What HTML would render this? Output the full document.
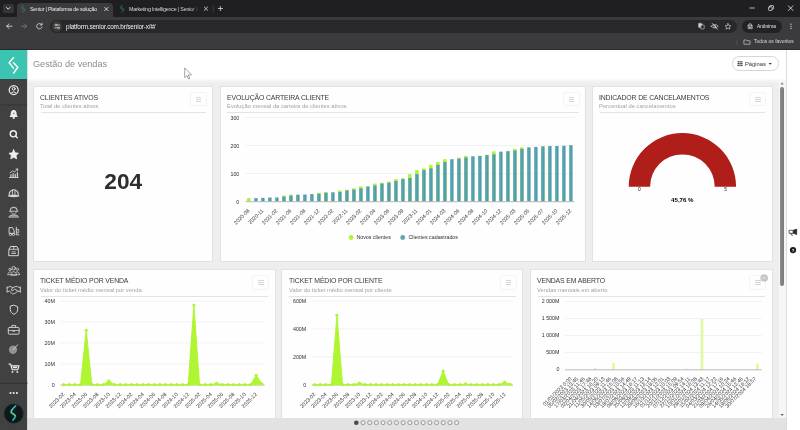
<!DOCTYPE html>
<html lang="pt-br"><head><meta charset="utf-8"><title>Senior | Plataforma de solução</title>
<style>
*{box-sizing:border-box;margin:0;padding:0}
html,body{width:800px;height:430px;overflow:hidden;background:#eeeeee;font-family:"Liberation Sans", sans-serif;}
#root{position:relative;width:800px;height:430px;overflow:hidden}
.abs{position:absolute}
#tabbar{left:0;top:0;width:800px;height:17px;background:#1f1e21}
#toolbar{left:0;top:17px;width:800px;height:33px;background:#3b3a3c;border-bottom:0.6px solid #2b2a2c}
#acttab{left:17px;top:3px;width:96px;height:14.5px;background:#3b3a3c;border-radius:4px 4px 0 0}
.tabtxt{position:absolute;font-size:5.35px;color:#ededed;white-space:nowrap;top:5.9px;line-height:6px;letter-spacing:-0.2px}
#omni{left:50px;top:19.7px;width:687px;height:13.4px;border-radius:7px;background:#282729}
#anon{left:741.5px;top:19.7px;width:40.4px;height:13.4px;border-radius:7px;background:#222123}
#side{left:0;top:50px;width:27.3px;height:380px;background:#414141;box-shadow:0.4px 0 1.2px rgba(0,0,0,0.35)}
#logo{left:0;top:49.8px;width:27.2px;height:29.5px;background:#3ac4b1}
#userblk{left:0;top:104.3px;width:27.3px;height:1.4px;background:linear-gradient(180deg,#393939,#3d3d3d)}
#hdr{left:27.5px;top:50px;width:758px;height:34px;background:linear-gradient(180deg,#ffffff 0,#ffffff 28.6px,#f3f3f3 31px,#eeeeee 34px)}
#hdr .ttl{position:absolute;left:5.7px;top:8.6px;font-size:9.15px;color:#8c8c8c;line-height:11px;white-space:nowrap}
#content{left:27.5px;top:80px;width:758px;height:338px;background:#eeeeee}
#pages{left:731.8px;top:56.4px;width:46.8px;height:14.4px;border:0.7px solid #d6d6d6;border-radius:7.2px;background:#fff}
#rstrip{left:785.6px;top:50px;width:14.4px;height:380px;background:#ffffff;border-left:0.6px solid #dcdcdc}
#bbar{left:27.3px;top:418px;width:758.4px;height:12px;background:#e2e2e2}
#sbtrack{left:779.2px;top:80px;width:6.4px;height:338px;background:#f6f6f6}
#sbthumb{left:780px;top:87px;width:3.8px;height:199px;background:linear-gradient(90deg,#8c8c8c,#7a7a7a);border-radius:1.9px}
.card{position:absolute;background:#fefefe;border:0.8px solid #e2e2e2}
.ct{position:absolute;left:6.2px;top:6.9px;font-size:6.9px;letter-spacing:-0.14px;line-height:8px;color:#3a3a3a;white-space:nowrap}
.cs{position:absolute;left:6.3px;top:16.3px;font-size:5.82px;line-height:7px;color:#a3a3a3;white-space:nowrap}
.cd{position:absolute;left:6.6px;right:6.4px;top:25.3px;height:0.9px;background:#e3e3e3}
.cm{position:absolute;right:5.4px;top:5.2px;width:17.1px;height:14.2px;border:0.7px solid #f4f4f4;border-radius:1.8px;background:#fefefe}
.cm i{position:absolute;left:5.3px;width:5.2px;height:1px;background:#d6d6d6}
.cm i:nth-child(1){top:3.85px}
.cm i:nth-child(2){top:5.9px}
.cm i:nth-child(3){top:7.95px}
svg text{font-family:"Liberation Sans", sans-serif}
svg,.ct,.cs,.tabtxt,#big,.ttl,.t{will-change:transform}
.ax{font-size:5.3px;fill:#2e2e2e}
#big{left:33px;top:168px;width:180.6px;text-align:center;font-size:22.7px;font-weight:bold;color:#2e2e2e;line-height:27px}
</style></head>
<body><div id="root">

<!-- ===== browser chrome ===== -->
<div id="tabbar" class="abs"></div>
<div id="toolbar" class="abs"></div>
<div id="acttab" class="abs"></div>
<div class="abs" style="left:3px;top:3.6px;width:10.5px;height:9.4px;border-radius:2.6px;background:#353637"></div>
<div class="tabtxt" style="left:30px">Senior | Plataforma de solução</div>
<div class="tabtxt" style="left:129px;width:70px;overflow:hidden;color:#d6d6d6;-webkit-mask-image:linear-gradient(90deg,#000 88%,transparent)">Marketing Intelligence | Senior X</div>
<div id="omni" class="abs"></div>
<div class="abs" style="left:52px;top:21.2px;width:10.4px;height:10.4px;border-radius:5.2px;background:#3b3b3c"></div>
<div class="abs t" style="left:65.5px;top:23.2px;font-size:6.4px;letter-spacing:-0.16px;line-height:7px;color:#f2f2f2;white-space:nowrap">platform.senior.com.br/senior-x/#/</div>
<div id="anon" class="abs"></div>
<div class="abs t" style="left:757.2px;top:23.7px;font-size:4.8px;line-height:6px;color:#ececec;white-space:nowrap">Anônima</div>
<div class="abs t" style="left:754.2px;top:39.2px;font-size:4.95px;line-height:6px;color:#dedede;white-space:nowrap">Todos os favoritos</div>

<svg class="abs" style="left:0;top:0" width="800" height="50" viewBox="0 0 800 50">
 <g fill="none" stroke="#e4e4e4" stroke-width="1" stroke-linecap="round" stroke-linejoin="round">
  <!-- tab search chevron -->
  <path d="M6.6,7.5 L8.25,9.2 L9.9,7.5" stroke-width="1"/>
  <!-- active tab close -->
  <path d="M104.7,7.4 L108,10.7 M108,7.4 L104.7,10.7" stroke-width="0.9"/>
  <!-- tab2 close -->
  <path d="M204.3,7 L207.6,10.3 M207.6,7 L204.3,10.3" stroke="#cfcfcf" stroke-width="0.9"/>
  <path d="M213.3,5.6 V11.4" stroke="#55575a" stroke-width="0.6"/>
  <path d="M218.3,8.5 H222.5 M220.4,6.4 V10.6" stroke="#d8d8d8" stroke-width="0.8"/>
  <!-- window controls -->
  <path d="M750,8 H754.4" stroke-width="0.8"/>
  <rect x="768.6" y="6.8" width="3.6" height="3.6" rx="0.7" stroke-width="0.8"/>
  <path d="M769.9,6.8 V5.9 Q769.9,5.5 770.3,5.5 H773 Q773.5,5.5 773.5,6 V8.7 Q773.5,9.1 773.1,9.1 H772.3" stroke-width="0.7"/>
  <path d="M788.3,5.8 L793,10.5 M793,5.8 L788.3,10.5" stroke-width="0.85"/>
  <!-- back / fwd / reload -->
  <path d="M12,26.2 H6.8 M9,23.9 L6.7,26.2 L9,28.5" stroke="#d9d9d9" stroke-width="0.9"/>
  <path d="M21.4,26.2 H26.6 M24.4,23.9 L26.7,26.2 L24.4,28.5" stroke="#767778" stroke-width="0.9"/>
  <path d="M41.6,24.6 A2.7,2.7 0 1 0 42,27.1" stroke="#d9d9d9" stroke-width="0.9"/>
  <path d="M42.1,23.2 V25 H40.3" stroke="#d9d9d9" stroke-width="0.8"/>
  <!-- tune icon -->
  <path d="M55,25 H59.6 M54.8,27.8 H59.4" stroke="#dedede" stroke-width="0.7"/>
  <circle cx="56" cy="25" r="0.9" fill="#3b3b3c" stroke="#dedede" stroke-width="0.6"/>
  <circle cx="58.4" cy="27.8" r="0.9" fill="#3b3b3c" stroke="#dedede" stroke-width="0.6"/>
  <!-- translate -->
  <rect x="698.6" y="23.4" width="3.4" height="4" rx="0.5" fill="#cfcfcf" stroke="#cfcfcf" stroke-width="0.5"/>
  <rect x="700.8" y="25" width="3.4" height="4" rx="0.5" fill="#27282a" stroke="#cfcfcf" stroke-width="0.6"/>
  <!-- eye off -->
  <path d="M711.2,26.3 Q714.7,22.5 718.2,26.3 Q714.7,30 711.2,26.3 Z" stroke="#d6d6d6" stroke-width="0.7"/>
  <circle cx="714.7" cy="26.3" r="1" stroke="#d6d6d6" stroke-width="0.6"/>
  <path d="M712.2,23.4 L717.4,29.2" stroke="#d6d6d6" stroke-width="0.8"/>
  <!-- star -->
  <path d="M728,23.6 L728.85,25.45 L730.9,25.7 L729.4,27.1 L729.8,29.1 L728,28.1 L726.2,29.1 L726.6,27.1 L725.1,25.7 L727.15,25.45 Z" stroke="#d6d6d6" stroke-width="0.65"/>
  <!-- incognito -->
  <path d="M747.6,25.9 H752.6 M748.6,25.7 L749.1,23.9 H751.1 L751.6,25.7" stroke="#ececec" stroke-width="0.7"/>
  <circle cx="748.9" cy="27.9" r="0.95" stroke="#ececec" stroke-width="0.6"/>
  <circle cx="751.3" cy="27.9" r="0.95" stroke="#ececec" stroke-width="0.6"/>
  <!-- bookmarks sep + folder -->
  <path d="M737,39.4 V44.6" stroke="#5d5e60" stroke-width="0.6"/>
  <path d="M744.3,40 H746.4 L747.1,40.8 H750 V44.2 H744.3 Z" stroke="#d6d6d6" stroke-width="0.65"/>
 </g>
 <g fill="#e0e0e0"><circle cx="791" cy="24.2" r="0.65"/><circle cx="791" cy="26.3" r="0.65"/><circle cx="791" cy="28.4" r="0.65"/></g>
 <!-- favicons -->
 <g fill="none" stroke="#2a9285" stroke-width="0.75" stroke-linecap="round" stroke-linejoin="round">
  <path d="M23.2,5.3 L21.4,7.6 L23.2,9.8 M23.2,7.6 L25,9.7 L23.2,12"/>
  <path d="M122.2,5.3 L120.4,7.6 L122.2,9.8 M122.2,7.6 L124,9.7 L122.2,12"/>
 </g>
</svg>

<!-- ===== app ===== -->
<div id="content" class="abs"></div>
<div id="hdr" class="abs"><div class="ttl">Gestão de vendas</div></div>
<div id="pages" class="abs"></div>
<div class="abs t" style="left:745.2px;top:60.5px;font-size:5.8px;line-height:7px;color:#333;white-space:nowrap">Páginas</div>
<svg class="abs" style="left:730px;top:54px" width="52" height="20" viewBox="730 54 52 20">
 <g fill="#333">
  <rect x="737.6" y="61.2" width="1.3" height="1.3"/><rect x="739.4" y="61.2" width="1.3" height="1.3"/><rect x="741.2" y="61.2" width="1.3" height="1.3"/>
  <rect x="737.6" y="63" width="1.3" height="1.3"/><rect x="739.4" y="63" width="1.3" height="1.3"/><rect x="741.2" y="63" width="1.3" height="1.3"/>
  <rect x="737.6" y="64.8" width="1.3" height="1.3"/><rect x="739.4" y="64.8" width="1.3" height="1.3"/><rect x="741.2" y="64.8" width="1.3" height="1.3"/>
  <path d="M768.6,63 H771.8 L770.2,64.8 Z"/>
 </g>
</svg>

<div class="card" style="left:33px;top:85.7px;width:180px;height:176.3px">
<div class="ct">CLIENTES ATIVOS</div><div class="cs">Total de clientes ativos</div>
<div class="cm"><i></i><i></i><i></i></div>
<div class="cd"></div>
</div>
<div class="card" style="left:219.8px;top:85.7px;width:366.2px;height:176.3px">
<div class="ct">EVOLUÇÃO CARTEIRA CLIENTE</div><div class="cs">Evolução mensal da carteira de clientes ativos</div>
<div class="cm"><i></i><i></i><i></i></div>
<div class="cd"></div>
</div>
<div class="card" style="left:592.2px;top:85.7px;width:180.4px;height:176.3px">
<div class="ct">INDICADOR DE CANCELAMENTOS</div><div class="cs">Percentual de cancelamentos</div>
<div class="cm"><i></i><i></i><i></i></div>
<div class="cd"></div>
</div>
<div class="card" style="left:33px;top:269.3px;width:242.5px;height:160px">
<div class="ct">TICKET MÉDIO POR VENDA</div><div class="cs">Valor do ticket médio mensal por venda</div>
<div class="cm"><i></i><i></i><i></i></div>
<div class="cd"></div>
</div>
<div class="card" style="left:281.4px;top:269.3px;width:241.8px;height:160px">
<div class="ct">TICKET MÉDIO POR CLIENTE</div><div class="cs">Valor do ticket médio mensal por cliente</div>
<div class="cm"><i></i><i></i><i></i></div>
<div class="cd"></div>
</div>
<div class="card" style="left:530px;top:269.3px;width:242.6px;height:160px">
<div class="ct">VENDAS EM ABERTO</div><div class="cs">Vendas mensais em aberto</div>
<div class="cm"><i></i><i></i><i></i></div>
<div class="cd"></div>
</div>

<div id="big" class="abs">204</div>

<svg class="abs" style="left:0;top:0" width="800" height="430" viewBox="0 0 800 430">
<defs>
 <linearGradient id="tg" x1="0" x2="1" y1="0" y2="0"><stop offset="0" stop-color="#6fb4be"/><stop offset="0.5" stop-color="#559fac"/><stop offset="1" stop-color="#4b98a6"/></linearGradient>
 <clipPath id="clipc"><rect x="27.5" y="80" width="752" height="338"/></clipPath>
</defs>
<g clip-path="url(#clipc)">
<line x1="245.5" y1="117.50" x2="574.5" y2="117.50" stroke="#e9e9e9" stroke-width="0.6"/>
<line x1="245.5" y1="145.50" x2="574.5" y2="145.50" stroke="#e9e9e9" stroke-width="0.6"/>
<line x1="245.5" y1="173.50" x2="574.5" y2="173.50" stroke="#e9e9e9" stroke-width="0.6"/>
<text x="239.3" y="120.10" text-anchor="end" class="ax">300</text>
<text x="239.3" y="148.10" text-anchor="end" class="ax">200</text>
<text x="239.3" y="176.10" text-anchor="end" class="ax">100</text>
<text x="239.3" y="204.10" text-anchor="end" class="ax">0</text>
<rect x="247.05" y="198.00" width="3.5" height="3.50" fill="#b0f532"/>
<rect x="254.05" y="198.14" width="3.5" height="3.36" fill="url(#tg)"/>
<rect x="261.05" y="197.86" width="3.5" height="3.64" fill="url(#tg)"/>
<rect x="268.05" y="197.47" width="3.5" height="4.03" fill="url(#tg)"/>
<rect x="275.05" y="197.47" width="3.5" height="4.03" fill="url(#tg)"/>
<rect x="282.05" y="195.62" width="3.5" height="5.88" fill="#b0f532"/>
<rect x="282.05" y="196.60" width="3.5" height="4.90" fill="url(#tg)"/>
<rect x="289.05" y="194.58" width="3.5" height="6.92" fill="#b0f532"/>
<rect x="289.05" y="195.62" width="3.5" height="5.88" fill="url(#tg)"/>
<rect x="296.05" y="194.72" width="3.5" height="6.78" fill="url(#tg)"/>
<rect x="303.05" y="194.58" width="3.5" height="6.92" fill="url(#tg)"/>
<rect x="310.05" y="194.08" width="3.5" height="7.42" fill="url(#tg)"/>
<rect x="317.05" y="192.82" width="3.5" height="8.68" fill="#b0f532"/>
<rect x="317.05" y="193.72" width="3.5" height="7.78" fill="url(#tg)"/>
<rect x="324.05" y="191.98" width="3.5" height="9.52" fill="#b0f532"/>
<rect x="324.05" y="192.82" width="3.5" height="8.68" fill="url(#tg)"/>
<rect x="331.05" y="192.26" width="3.5" height="9.24" fill="url(#tg)"/>
<rect x="338.05" y="190.44" width="3.5" height="11.06" fill="#b0f532"/>
<rect x="338.05" y="192.06" width="3.5" height="9.44" fill="url(#tg)"/>
<rect x="345.05" y="189.74" width="3.5" height="11.76" fill="#b0f532"/>
<rect x="345.05" y="190.44" width="3.5" height="11.06" fill="url(#tg)"/>
<rect x="352.05" y="188.34" width="3.5" height="13.16" fill="#b0f532"/>
<rect x="352.05" y="189.63" width="3.5" height="11.87" fill="url(#tg)"/>
<rect x="359.05" y="186.38" width="3.5" height="15.12" fill="#b0f532"/>
<rect x="359.05" y="188.34" width="3.5" height="13.16" fill="url(#tg)"/>
<rect x="366.05" y="186.38" width="3.5" height="15.12" fill="url(#tg)"/>
<rect x="373.05" y="183.58" width="3.5" height="17.92" fill="#b0f532"/>
<rect x="373.05" y="185.54" width="3.5" height="15.96" fill="url(#tg)"/>
<rect x="380.05" y="182.74" width="3.5" height="18.76" fill="#b0f532"/>
<rect x="380.05" y="183.58" width="3.5" height="17.92" fill="url(#tg)"/>
<rect x="387.05" y="181.48" width="3.5" height="20.02" fill="#b0f532"/>
<rect x="387.05" y="182.74" width="3.5" height="18.76" fill="url(#tg)"/>
<rect x="394.05" y="179.10" width="3.5" height="22.40" fill="#b0f532"/>
<rect x="394.05" y="181.06" width="3.5" height="20.44" fill="url(#tg)"/>
<rect x="401.05" y="178.26" width="3.5" height="23.24" fill="#b0f532"/>
<rect x="401.05" y="179.10" width="3.5" height="22.40" fill="url(#tg)"/>
<rect x="408.05" y="174.17" width="3.5" height="27.33" fill="#b0f532"/>
<rect x="408.05" y="177.98" width="3.5" height="23.52" fill="url(#tg)"/>
<rect x="415.05" y="170.14" width="3.5" height="31.36" fill="#b0f532"/>
<rect x="415.05" y="174.17" width="3.5" height="27.33" fill="url(#tg)"/>
<rect x="422.05" y="168.46" width="3.5" height="33.04" fill="#b0f532"/>
<rect x="422.05" y="170.14" width="3.5" height="31.36" fill="url(#tg)"/>
<rect x="429.05" y="164.82" width="3.5" height="36.68" fill="#b0f532"/>
<rect x="429.05" y="168.46" width="3.5" height="33.04" fill="url(#tg)"/>
<rect x="436.05" y="162.02" width="3.5" height="39.48" fill="#b0f532"/>
<rect x="436.05" y="164.82" width="3.5" height="36.68" fill="url(#tg)"/>
<rect x="443.05" y="159.22" width="3.5" height="42.28" fill="#b0f532"/>
<rect x="443.05" y="162.02" width="3.5" height="39.48" fill="url(#tg)"/>
<rect x="450.05" y="159.22" width="3.5" height="42.28" fill="url(#tg)"/>
<rect x="457.05" y="157.82" width="3.5" height="43.68" fill="#b0f532"/>
<rect x="457.05" y="158.66" width="3.5" height="42.84" fill="url(#tg)"/>
<rect x="464.05" y="155.86" width="3.5" height="45.64" fill="#b0f532"/>
<rect x="464.05" y="157.54" width="3.5" height="43.96" fill="url(#tg)"/>
<rect x="471.05" y="156.28" width="3.5" height="45.22" fill="url(#tg)"/>
<rect x="478.05" y="155.86" width="3.5" height="45.64" fill="url(#tg)"/>
<rect x="485.05" y="154.74" width="3.5" height="46.76" fill="#b0f532"/>
<rect x="485.05" y="155.13" width="3.5" height="46.37" fill="url(#tg)"/>
<rect x="492.05" y="151.38" width="3.5" height="50.12" fill="#b0f532"/>
<rect x="492.05" y="154.32" width="3.5" height="47.18" fill="url(#tg)"/>
<rect x="499.05" y="151.66" width="3.5" height="49.84" fill="url(#tg)"/>
<rect x="506.05" y="150.82" width="3.5" height="50.68" fill="#b0f532"/>
<rect x="506.05" y="151.38" width="3.5" height="50.12" fill="url(#tg)"/>
<rect x="513.05" y="148.94" width="3.5" height="52.56" fill="#b0f532"/>
<rect x="513.05" y="150.54" width="3.5" height="50.96" fill="url(#tg)"/>
<rect x="520.05" y="147.32" width="3.5" height="54.18" fill="#b0f532"/>
<rect x="520.05" y="148.94" width="3.5" height="52.56" fill="url(#tg)"/>
<rect x="527.05" y="147.32" width="3.5" height="54.18" fill="url(#tg)"/>
<rect x="534.05" y="146.98" width="3.5" height="54.52" fill="url(#tg)"/>
<rect x="541.05" y="146.06" width="3.5" height="55.44" fill="#b0f532"/>
<rect x="541.05" y="146.51" width="3.5" height="54.99" fill="url(#tg)"/>
<rect x="548.05" y="146.06" width="3.5" height="55.44" fill="url(#tg)"/>
<rect x="555.05" y="146.06" width="3.5" height="55.44" fill="url(#tg)"/>
<rect x="562.05" y="145.78" width="3.5" height="55.72" fill="url(#tg)"/>
<rect x="569.05" y="145.22" width="3.5" height="56.28" fill="url(#tg)"/>
<line x1="245.5" y1="201.7" x2="574.5" y2="201.7" stroke="#a8a8a8" stroke-width="0.8"/>
<text transform="translate(248.50,209.80) rotate(-45)" text-anchor="end" class="ax" dy="1.9">2020-08</text>
<text transform="translate(262.50,209.80) rotate(-45)" text-anchor="end" class="ax" dy="1.9">2020-11</text>
<text transform="translate(276.50,209.80) rotate(-45)" text-anchor="end" class="ax" dy="1.9">2021-02</text>
<text transform="translate(290.50,209.80) rotate(-45)" text-anchor="end" class="ax" dy="1.9">2021-06</text>
<text transform="translate(304.50,209.80) rotate(-45)" text-anchor="end" class="ax" dy="1.9">2021-08</text>
<text transform="translate(318.50,209.80) rotate(-45)" text-anchor="end" class="ax" dy="1.9">2021-12</text>
<text transform="translate(332.50,209.80) rotate(-45)" text-anchor="end" class="ax" dy="1.9">2022-02</text>
<text transform="translate(346.50,209.80) rotate(-45)" text-anchor="end" class="ax" dy="1.9">2022-11</text>
<text transform="translate(360.50,209.80) rotate(-45)" text-anchor="end" class="ax" dy="1.9">2023-02</text>
<text transform="translate(374.50,209.80) rotate(-45)" text-anchor="end" class="ax" dy="1.9">2023-04</text>
<text transform="translate(388.50,209.80) rotate(-45)" text-anchor="end" class="ax" dy="1.9">2023-06</text>
<text transform="translate(402.50,209.80) rotate(-45)" text-anchor="end" class="ax" dy="1.9">2023-09</text>
<text transform="translate(416.50,209.80) rotate(-45)" text-anchor="end" class="ax" dy="1.9">2023-11</text>
<text transform="translate(430.50,209.80) rotate(-45)" text-anchor="end" class="ax" dy="1.9">2024-01</text>
<text transform="translate(444.50,209.80) rotate(-45)" text-anchor="end" class="ax" dy="1.9">2024-03</text>
<text transform="translate(458.50,209.80) rotate(-45)" text-anchor="end" class="ax" dy="1.9">2024-06</text>
<text transform="translate(472.50,209.80) rotate(-45)" text-anchor="end" class="ax" dy="1.9">2024-08</text>
<text transform="translate(486.50,209.80) rotate(-45)" text-anchor="end" class="ax" dy="1.9">2024-10</text>
<text transform="translate(500.50,209.80) rotate(-45)" text-anchor="end" class="ax" dy="1.9">2024-12</text>
<text transform="translate(514.50,209.80) rotate(-45)" text-anchor="end" class="ax" dy="1.9">2025-03</text>
<text transform="translate(528.50,209.80) rotate(-45)" text-anchor="end" class="ax" dy="1.9">2025-05</text>
<text transform="translate(542.50,209.80) rotate(-45)" text-anchor="end" class="ax" dy="1.9">2025-07</text>
<text transform="translate(556.50,209.80) rotate(-45)" text-anchor="end" class="ax" dy="1.9">2025-10</text>
<text transform="translate(570.50,209.80) rotate(-45)" text-anchor="end" class="ax" dy="1.9">2025-12</text>
<circle cx="351.1" cy="237.5" r="2.4" fill="#b0f532"/>
<text x="356.4" y="239.4" class="ax">Novos clientes</text>
<circle cx="402.7" cy="237.5" r="2.4" fill="#5aa6b2"/>
<text x="408.5" y="239.4" class="ax">Clientes cadastrados</text>
<path d="M628.6999999999999,186.7 A53.7,53.7 0 0 1 736.1,186.7 L714.6999999999999,186.7 A32.3,32.3 0 0 0 650.1,186.7 Z" fill="#b01e19"/>
<text x="639.3" y="191" text-anchor="middle" style="font-size:4.8px;fill:#222">0</text>
<text x="725.7" y="191" text-anchor="middle" style="font-size:4.8px;fill:#222">5</text>
<text x="682.3" y="202.2" text-anchor="middle" style="font-size:6.1px;font-weight:bold;fill:#000">45,76 %</text>
<line x1="60.7" y1="301.10" x2="264.7" y2="301.10" stroke="#e9e9e9" stroke-width="0.6"/>
<text x="54.8" y="303.00" text-anchor="end" class="ax">40M</text>
<line x1="60.7" y1="322.00" x2="264.7" y2="322.00" stroke="#e9e9e9" stroke-width="0.6"/>
<text x="54.8" y="323.90" text-anchor="end" class="ax">30M</text>
<line x1="60.7" y1="342.90" x2="264.7" y2="342.90" stroke="#e9e9e9" stroke-width="0.6"/>
<text x="54.8" y="344.80" text-anchor="end" class="ax">20M</text>
<line x1="60.7" y1="363.80" x2="264.7" y2="363.80" stroke="#e9e9e9" stroke-width="0.6"/>
<text x="54.8" y="365.70" text-anchor="end" class="ax">10M</text>
<text x="54.8" y="386.60" text-anchor="end" class="ax">0</text>
<line x1="60.7" y1="385.0" x2="264.7" y2="385.0" stroke="#a8a8a8" stroke-width="0.8"/>
<path d="M63.53,384.70 L63.53,384.70 L69.20,384.70 L74.87,384.70 L80.53,384.70 L86.20,330.36 L91.87,384.70 L97.53,384.70 L103.20,384.70 L108.87,380.94 L114.53,384.70 L120.20,384.70 L125.87,384.70 L131.53,384.70 L137.20,384.70 L142.87,384.70 L148.53,384.70 L154.20,384.70 L159.87,384.70 L165.53,384.70 L171.20,384.70 L176.87,384.70 L182.53,384.70 L188.20,384.70 L193.87,305.07 L199.53,384.70 L205.20,384.70 L210.87,384.70 L216.53,383.24 L222.20,384.70 L227.87,384.70 L233.53,384.70 L239.20,384.70 L244.87,384.70 L250.53,384.70 L256.20,375.30 L261.87,383.86 L261.87,384.70 Z" fill="#b0f532" stroke="#b0f532" stroke-width="1" stroke-linejoin="round"/>
<circle cx="63.53" cy="384.70" r="1.6" fill="#b0f532"/>
<circle cx="69.20" cy="384.70" r="1.6" fill="#b0f532"/>
<circle cx="74.87" cy="384.70" r="1.6" fill="#b0f532"/>
<circle cx="80.53" cy="384.70" r="1.6" fill="#b0f532"/>
<circle cx="86.20" cy="330.36" r="1.6" fill="#b0f532"/>
<circle cx="91.87" cy="384.70" r="1.6" fill="#b0f532"/>
<circle cx="97.53" cy="384.70" r="1.6" fill="#b0f532"/>
<circle cx="103.20" cy="384.70" r="1.6" fill="#b0f532"/>
<circle cx="108.87" cy="380.94" r="1.6" fill="#b0f532"/>
<circle cx="114.53" cy="384.70" r="1.6" fill="#b0f532"/>
<circle cx="120.20" cy="384.70" r="1.6" fill="#b0f532"/>
<circle cx="125.87" cy="384.70" r="1.6" fill="#b0f532"/>
<circle cx="131.53" cy="384.70" r="1.6" fill="#b0f532"/>
<circle cx="137.20" cy="384.70" r="1.6" fill="#b0f532"/>
<circle cx="142.87" cy="384.70" r="1.6" fill="#b0f532"/>
<circle cx="148.53" cy="384.70" r="1.6" fill="#b0f532"/>
<circle cx="154.20" cy="384.70" r="1.6" fill="#b0f532"/>
<circle cx="159.87" cy="384.70" r="1.6" fill="#b0f532"/>
<circle cx="165.53" cy="384.70" r="1.6" fill="#b0f532"/>
<circle cx="171.20" cy="384.70" r="1.6" fill="#b0f532"/>
<circle cx="176.87" cy="384.70" r="1.6" fill="#b0f532"/>
<circle cx="182.53" cy="384.70" r="1.6" fill="#b0f532"/>
<circle cx="188.20" cy="384.70" r="1.6" fill="#b0f532"/>
<circle cx="193.87" cy="305.07" r="1.6" fill="#b0f532"/>
<circle cx="199.53" cy="384.70" r="1.6" fill="#b0f532"/>
<circle cx="205.20" cy="384.70" r="1.6" fill="#b0f532"/>
<circle cx="210.87" cy="384.70" r="1.6" fill="#b0f532"/>
<circle cx="216.53" cy="383.24" r="1.6" fill="#b0f532"/>
<circle cx="222.20" cy="384.70" r="1.6" fill="#b0f532"/>
<circle cx="227.87" cy="384.70" r="1.6" fill="#b0f532"/>
<circle cx="233.53" cy="384.70" r="1.6" fill="#b0f532"/>
<circle cx="239.20" cy="384.70" r="1.6" fill="#b0f532"/>
<circle cx="244.87" cy="384.70" r="1.6" fill="#b0f532"/>
<circle cx="250.53" cy="384.70" r="1.6" fill="#b0f532"/>
<circle cx="256.20" cy="375.30" r="1.6" fill="#b0f532"/>
<circle cx="261.87" cy="383.86" r="1.6" fill="#b0f532"/>
<text transform="translate(63.53,393.40) rotate(-45)" text-anchor="end" class="ax" dy="1.9">2023-02</text>
<text transform="translate(74.87,393.40) rotate(-45)" text-anchor="end" class="ax" dy="1.9">2023-04</text>
<text transform="translate(86.20,393.40) rotate(-45)" text-anchor="end" class="ax" dy="1.9">2023-06</text>
<text transform="translate(97.53,393.40) rotate(-45)" text-anchor="end" class="ax" dy="1.9">2023-08</text>
<text transform="translate(108.87,393.40) rotate(-45)" text-anchor="end" class="ax" dy="1.9">2023-10</text>
<text transform="translate(120.20,393.40) rotate(-45)" text-anchor="end" class="ax" dy="1.9">2023-12</text>
<text transform="translate(131.53,393.40) rotate(-45)" text-anchor="end" class="ax" dy="1.9">2024-02</text>
<text transform="translate(142.87,393.40) rotate(-45)" text-anchor="end" class="ax" dy="1.9">2024-04</text>
<text transform="translate(154.20,393.40) rotate(-45)" text-anchor="end" class="ax" dy="1.9">2024-06</text>
<text transform="translate(165.53,393.40) rotate(-45)" text-anchor="end" class="ax" dy="1.9">2024-08</text>
<text transform="translate(176.87,393.40) rotate(-45)" text-anchor="end" class="ax" dy="1.9">2024-10</text>
<text transform="translate(188.20,393.40) rotate(-45)" text-anchor="end" class="ax" dy="1.9">2024-12</text>
<text transform="translate(199.53,393.40) rotate(-45)" text-anchor="end" class="ax" dy="1.9">2025-02</text>
<text transform="translate(210.87,393.40) rotate(-45)" text-anchor="end" class="ax" dy="1.9">2025-04</text>
<text transform="translate(222.20,393.40) rotate(-45)" text-anchor="end" class="ax" dy="1.9">2025-06</text>
<text transform="translate(233.53,393.40) rotate(-45)" text-anchor="end" class="ax" dy="1.9">2025-08</text>
<text transform="translate(244.87,393.40) rotate(-45)" text-anchor="end" class="ax" dy="1.9">2025-10</text>
<text transform="translate(256.20,393.40) rotate(-45)" text-anchor="end" class="ax" dy="1.9">2025-12</text>
<line x1="311.8" y1="301.00" x2="513" y2="301.00" stroke="#e9e9e9" stroke-width="0.6"/>
<text x="306.2" y="302.90" text-anchor="end" class="ax">600M</text>
<line x1="311.8" y1="328.90" x2="513" y2="328.90" stroke="#e9e9e9" stroke-width="0.6"/>
<text x="306.2" y="330.80" text-anchor="end" class="ax">400M</text>
<line x1="311.8" y1="356.80" x2="513" y2="356.80" stroke="#e9e9e9" stroke-width="0.6"/>
<text x="306.2" y="358.70" text-anchor="end" class="ax">200M</text>
<text x="306.2" y="386.60" text-anchor="end" class="ax">0</text>
<line x1="311.8" y1="385.0" x2="513" y2="385.0" stroke="#a8a8a8" stroke-width="0.8"/>
<path d="M314.59,384.70 L314.59,384.70 L320.18,384.70 L325.77,384.70 L331.36,384.70 L336.95,315.23 L342.54,384.70 L348.13,384.70 L353.72,384.70 L359.31,383.03 L364.89,384.70 L370.48,384.70 L376.07,384.70 L381.66,384.70 L387.25,384.70 L392.84,384.70 L398.43,384.70 L404.02,384.70 L409.61,384.70 L415.19,384.70 L420.78,384.70 L426.37,384.70 L431.96,384.70 L437.55,384.70 L443.14,371.17 L448.73,384.70 L454.32,384.70 L459.91,384.70 L465.49,383.86 L471.08,384.70 L476.67,384.70 L482.26,384.70 L487.85,384.70 L493.44,384.70 L499.03,384.70 L504.62,382.19 L510.21,384.28 L510.21,384.70 Z" fill="#b0f532" stroke="#b0f532" stroke-width="1" stroke-linejoin="round"/>
<circle cx="314.59" cy="384.70" r="1.6" fill="#b0f532"/>
<circle cx="320.18" cy="384.70" r="1.6" fill="#b0f532"/>
<circle cx="325.77" cy="384.70" r="1.6" fill="#b0f532"/>
<circle cx="331.36" cy="384.70" r="1.6" fill="#b0f532"/>
<circle cx="336.95" cy="315.23" r="1.6" fill="#b0f532"/>
<circle cx="342.54" cy="384.70" r="1.6" fill="#b0f532"/>
<circle cx="348.13" cy="384.70" r="1.6" fill="#b0f532"/>
<circle cx="353.72" cy="384.70" r="1.6" fill="#b0f532"/>
<circle cx="359.31" cy="383.03" r="1.6" fill="#b0f532"/>
<circle cx="364.89" cy="384.70" r="1.6" fill="#b0f532"/>
<circle cx="370.48" cy="384.70" r="1.6" fill="#b0f532"/>
<circle cx="376.07" cy="384.70" r="1.6" fill="#b0f532"/>
<circle cx="381.66" cy="384.70" r="1.6" fill="#b0f532"/>
<circle cx="387.25" cy="384.70" r="1.6" fill="#b0f532"/>
<circle cx="392.84" cy="384.70" r="1.6" fill="#b0f532"/>
<circle cx="398.43" cy="384.70" r="1.6" fill="#b0f532"/>
<circle cx="404.02" cy="384.70" r="1.6" fill="#b0f532"/>
<circle cx="409.61" cy="384.70" r="1.6" fill="#b0f532"/>
<circle cx="415.19" cy="384.70" r="1.6" fill="#b0f532"/>
<circle cx="420.78" cy="384.70" r="1.6" fill="#b0f532"/>
<circle cx="426.37" cy="384.70" r="1.6" fill="#b0f532"/>
<circle cx="431.96" cy="384.70" r="1.6" fill="#b0f532"/>
<circle cx="437.55" cy="384.70" r="1.6" fill="#b0f532"/>
<circle cx="443.14" cy="371.17" r="1.6" fill="#b0f532"/>
<circle cx="448.73" cy="384.70" r="1.6" fill="#b0f532"/>
<circle cx="454.32" cy="384.70" r="1.6" fill="#b0f532"/>
<circle cx="459.91" cy="384.70" r="1.6" fill="#b0f532"/>
<circle cx="465.49" cy="383.86" r="1.6" fill="#b0f532"/>
<circle cx="471.08" cy="384.70" r="1.6" fill="#b0f532"/>
<circle cx="476.67" cy="384.70" r="1.6" fill="#b0f532"/>
<circle cx="482.26" cy="384.70" r="1.6" fill="#b0f532"/>
<circle cx="487.85" cy="384.70" r="1.6" fill="#b0f532"/>
<circle cx="493.44" cy="384.70" r="1.6" fill="#b0f532"/>
<circle cx="499.03" cy="384.70" r="1.6" fill="#b0f532"/>
<circle cx="504.62" cy="382.19" r="1.6" fill="#b0f532"/>
<circle cx="510.21" cy="384.28" r="1.6" fill="#b0f532"/>
<text transform="translate(314.59,393.40) rotate(-45)" text-anchor="end" class="ax" dy="1.9">2023-02</text>
<text transform="translate(325.77,393.40) rotate(-45)" text-anchor="end" class="ax" dy="1.9">2023-04</text>
<text transform="translate(336.95,393.40) rotate(-45)" text-anchor="end" class="ax" dy="1.9">2023-06</text>
<text transform="translate(348.13,393.40) rotate(-45)" text-anchor="end" class="ax" dy="1.9">2023-08</text>
<text transform="translate(359.31,393.40) rotate(-45)" text-anchor="end" class="ax" dy="1.9">2023-10</text>
<text transform="translate(370.48,393.40) rotate(-45)" text-anchor="end" class="ax" dy="1.9">2023-12</text>
<text transform="translate(381.66,393.40) rotate(-45)" text-anchor="end" class="ax" dy="1.9">2024-02</text>
<text transform="translate(392.84,393.40) rotate(-45)" text-anchor="end" class="ax" dy="1.9">2024-04</text>
<text transform="translate(404.02,393.40) rotate(-45)" text-anchor="end" class="ax" dy="1.9">2024-06</text>
<text transform="translate(415.19,393.40) rotate(-45)" text-anchor="end" class="ax" dy="1.9">2024-08</text>
<text transform="translate(426.37,393.40) rotate(-45)" text-anchor="end" class="ax" dy="1.9">2024-10</text>
<text transform="translate(437.55,393.40) rotate(-45)" text-anchor="end" class="ax" dy="1.9">2024-12</text>
<text transform="translate(448.73,393.40) rotate(-45)" text-anchor="end" class="ax" dy="1.9">2025-02</text>
<text transform="translate(459.91,393.40) rotate(-45)" text-anchor="end" class="ax" dy="1.9">2025-04</text>
<text transform="translate(471.08,393.40) rotate(-45)" text-anchor="end" class="ax" dy="1.9">2025-06</text>
<text transform="translate(482.26,393.40) rotate(-45)" text-anchor="end" class="ax" dy="1.9">2025-08</text>
<text transform="translate(493.44,393.40) rotate(-45)" text-anchor="end" class="ax" dy="1.9">2025-10</text>
<text transform="translate(504.62,393.40) rotate(-45)" text-anchor="end" class="ax" dy="1.9">2025-12</text>
<line x1="565" y1="301.50" x2="761.8" y2="301.50" stroke="#e9e9e9" stroke-width="0.6"/>
<text x="559.4" y="303.40" text-anchor="end" class="ax">2 000M</text>
<line x1="565" y1="318.50" x2="761.8" y2="318.50" stroke="#e9e9e9" stroke-width="0.6"/>
<text x="559.4" y="320.40" text-anchor="end" class="ax">1 500M</text>
<line x1="565" y1="335.50" x2="761.8" y2="335.50" stroke="#e9e9e9" stroke-width="0.6"/>
<text x="559.4" y="337.40" text-anchor="end" class="ax">1 000M</text>
<line x1="565" y1="352.50" x2="761.8" y2="352.50" stroke="#e9e9e9" stroke-width="0.6"/>
<text x="559.4" y="354.40" text-anchor="end" class="ax">500M</text>
<text x="559.4" y="371.40" text-anchor="end" class="ax">0</text>
<rect x="612.4" y="363" width="2.2" height="6.5" fill="#dcf88e"/>
<rect x="700.7" y="319" width="2.6" height="50.5" fill="#e0f99c"/>
<rect x="756.3" y="363.5" width="2.2" height="6" fill="#dcf88e"/>
<rect x="594.8" y="368" width="0.8" height="1.5" fill="#bbb"/>
<rect x="686" y="368.3" width="1" height="1.2" fill="#d6f77e"/>
<line x1="565" y1="369.8" x2="761.8" y2="369.8" stroke="#a8a8a8" stroke-width="0.8"/>
<text transform="translate(570.70,377.80) rotate(-45)" text-anchor="end" class="ax" dy="1.9">01/01/2023 0:00</text>
<text transform="translate(577.29,377.80) rotate(-45)" text-anchor="end" class="ax" dy="1.9">05/02/2023 13:45</text>
<text transform="translate(583.88,377.80) rotate(-45)" text-anchor="end" class="ax" dy="1.9">17/03/2023 11:46</text>
<text transform="translate(590.47,377.80) rotate(-45)" text-anchor="end" class="ax" dy="1.9">02/04/2023 17:48</text>
<text transform="translate(597.06,377.80) rotate(-45)" text-anchor="end" class="ax" dy="1.9">21/04/2023 16:20</text>
<text transform="translate(603.65,377.80) rotate(-45)" text-anchor="end" class="ax" dy="1.9">11/05/2023 09:13</text>
<text transform="translate(610.24,377.80) rotate(-45)" text-anchor="end" class="ax" dy="1.9">30/05/2023 11:46</text>
<text transform="translate(616.83,377.80) rotate(-45)" text-anchor="end" class="ax" dy="1.9">14/06/2023 15:08</text>
<text transform="translate(623.41,377.80) rotate(-45)" text-anchor="end" class="ax" dy="1.9">03/07/2023 10:56</text>
<text transform="translate(630.00,377.80) rotate(-45)" text-anchor="end" class="ax" dy="1.9">19/07/2023 14:49</text>
<text transform="translate(636.59,377.80) rotate(-45)" text-anchor="end" class="ax" dy="1.9">08/08/2023 16:17</text>
<text transform="translate(643.18,377.80) rotate(-45)" text-anchor="end" class="ax" dy="1.9">25/08/2023 11:13</text>
<text transform="translate(649.77,377.80) rotate(-45)" text-anchor="end" class="ax" dy="1.9">12/09/2023 13:14</text>
<text transform="translate(656.36,377.80) rotate(-45)" text-anchor="end" class="ax" dy="1.9">29/09/2023 18:06</text>
<text transform="translate(662.95,377.80) rotate(-45)" text-anchor="end" class="ax" dy="1.9">16/10/2023 12:01</text>
<text transform="translate(669.54,377.80) rotate(-45)" text-anchor="end" class="ax" dy="1.9">01/11/2023 10:03</text>
<text transform="translate(676.13,377.80) rotate(-45)" text-anchor="end" class="ax" dy="1.9">20/11/2023 15:09</text>
<text transform="translate(682.72,377.80) rotate(-45)" text-anchor="end" class="ax" dy="1.9">07/12/2023 09:54</text>
<text transform="translate(689.31,377.80) rotate(-45)" text-anchor="end" class="ax" dy="1.9">22/12/2023 14:11</text>
<text transform="translate(695.90,377.80) rotate(-45)" text-anchor="end" class="ax" dy="1.9">10/01/2024 16:08</text>
<text transform="translate(702.49,377.80) rotate(-45)" text-anchor="end" class="ax" dy="1.9">29/01/2024 13:43</text>
<text transform="translate(709.08,377.80) rotate(-45)" text-anchor="end" class="ax" dy="1.9">15/02/2024 11:17</text>
<text transform="translate(715.66,377.80) rotate(-45)" text-anchor="end" class="ax" dy="1.9">04/03/2024 12:22</text>
<text transform="translate(722.25,377.80) rotate(-45)" text-anchor="end" class="ax" dy="1.9">21/03/2024 17:16</text>
<text transform="translate(728.84,377.80) rotate(-45)" text-anchor="end" class="ax" dy="1.9">09/04/2024 10:24</text>
<text transform="translate(735.43,377.80) rotate(-45)" text-anchor="end" class="ax" dy="1.9">26/04/2024 15:46</text>
<text transform="translate(742.02,377.80) rotate(-45)" text-anchor="end" class="ax" dy="1.9">14/05/2024 12:46</text>
<text transform="translate(748.61,377.80) rotate(-45)" text-anchor="end" class="ax" dy="1.9">19/06/2024 16:12</text>
<text transform="translate(755.20,377.80) rotate(-45)" text-anchor="end" class="ax" dy="1.9">30/07/2024 18:57</text>
<circle cx="764.2" cy="278" r="3.8" fill="#c6c6c6"/>
<path d="M763,276.8 L765.4,279.2 M765.4,276.8 L763,279.2" stroke="#ececec" stroke-width="0.6"/>
</g>
</svg>

<!-- scrollbar / right strip / bottom bar -->
<div id="sbtrack" class="abs"></div>
<div id="sbthumb" class="abs"></div>
<div id="bbar" class="abs"></div>
<div id="rstrip" class="abs"></div>
<svg class="abs" style="left:0;top:0" width="800" height="430" viewBox="0 0 800 430">
 <path d="M780.3,84.4 H783.9 L782.1,82.3 Z" fill="#8a8a8a"/>
 <path d="M780.3,413.9 H783.9 L782.1,416 Z" fill="#6a6a6a"/>
 <circle cx="356.30" cy="422.7" r="2.3" fill="#4a4a4a"/>
<circle cx="362.99" cy="422.7" r="2" fill="#f0f0f0" stroke="#868686" stroke-width="0.8"/>
<circle cx="369.67" cy="422.7" r="2" fill="#f0f0f0" stroke="#868686" stroke-width="0.8"/>
<circle cx="376.36" cy="422.7" r="2" fill="#f0f0f0" stroke="#868686" stroke-width="0.8"/>
<circle cx="383.05" cy="422.7" r="2" fill="#f0f0f0" stroke="#868686" stroke-width="0.8"/>
<circle cx="389.74" cy="422.7" r="2" fill="#f0f0f0" stroke="#868686" stroke-width="0.8"/>
<circle cx="396.42" cy="422.7" r="2" fill="#f0f0f0" stroke="#868686" stroke-width="0.8"/>
<circle cx="403.11" cy="422.7" r="2" fill="#f0f0f0" stroke="#868686" stroke-width="0.8"/>
<circle cx="409.80" cy="422.7" r="2" fill="#f0f0f0" stroke="#868686" stroke-width="0.8"/>
<circle cx="416.48" cy="422.7" r="2" fill="#f0f0f0" stroke="#868686" stroke-width="0.8"/>
<circle cx="423.17" cy="422.7" r="2" fill="#f0f0f0" stroke="#868686" stroke-width="0.8"/>
<circle cx="429.86" cy="422.7" r="2" fill="#f0f0f0" stroke="#868686" stroke-width="0.8"/>
<circle cx="436.54" cy="422.7" r="2" fill="#f0f0f0" stroke="#868686" stroke-width="0.8"/>
<circle cx="443.23" cy="422.7" r="2" fill="#f0f0f0" stroke="#868686" stroke-width="0.8"/>
<circle cx="449.92" cy="422.7" r="2" fill="#f0f0f0" stroke="#868686" stroke-width="0.8"/>
<circle cx="456.61" cy="422.7" r="2" fill="#f0f0f0" stroke="#868686" stroke-width="0.8"/>
 <!-- right strip icons -->
 <g stroke="#2a2a2a" stroke-width="0.75" stroke-linejoin="round" stroke-linecap="round">
  <path d="M789.5,230.3 H793.5 V233.3 H789.5 Z" fill="none"/>
  <path d="M793.5,230.3 L796.7,229.1 V234.5 L793.5,233.3 Z" fill="#2a2a2a"/>
  <path d="M790.8,233.4 L791.5,235.2 H792.6" fill="none"/>
 </g>
 <circle cx="793" cy="250.1" r="3.15" fill="#1c1c1c"/>
 <text x="793" y="251.7" text-anchor="middle" style="font-size:4.4px;font-weight:bold;fill:#fff">?</text>
 <!-- mouse cursor -->
 <path d="M184.7,67.9 L184.7,77.7 L187,75.6 L188.5,79 L189.8,78.4 L188.3,75.1 L191.5,74.9 Z" fill="#fff" stroke="#5a5a5a" stroke-width="0.55" stroke-linejoin="round"/>
</svg>

<!-- sidebar -->
<div id="side" class="abs"></div>
<div id="userblk" class="abs"></div>
<div id="logo" class="abs"></div>
<svg class="abs" style="left:0;top:50px" width="28" height="380" viewBox="0 50 28 380">
 <defs><radialGradient id="av" cx="0.5" cy="0.5" r="0.5"><stop offset="0" stop-color="#0f1b20"/><stop offset="0.8" stop-color="#121516"/><stop offset="1" stop-color="#1b2f33"/></radialGradient>
 <linearGradient id="sepg" x1="0" x2="0" y1="0" y2="1"><stop offset="0" stop-color="#414141"/><stop offset="0.5" stop-color="#313131"/><stop offset="1" stop-color="#414141"/></linearGradient></defs>
 <!-- logo S -->
 <g fill="none" stroke="#ffffff" stroke-width="1.7" stroke-linecap="round" stroke-linejoin="round">
  <path d="M13.55,57.5 L9.1,62.75 L13.5,68.1" stroke-width="1.45"/>
  <path d="M13.6,62.8 L17.8,67.3 L13.6,73" stroke-width="1.45"/>
 </g>
 <g transform="translate(13.7,90) scale(1)" fill="none" stroke="#eceeef" stroke-width="1.1" stroke-linecap="round" stroke-linejoin="round"><circle r="4.5" stroke-width="1.25"/><circle cy="-1.2" r="1.45" stroke-width="1"/><path d="M-2.6,3 Q0,0.3 2.6,3" stroke-width="1"/></g>
<g transform="translate(13.7,114.4) scale(1)" fill="none" stroke="#eceeef" stroke-width="1.1" stroke-linecap="round" stroke-linejoin="round"><path d="M0,-4.3 C-2.4,-4.3 -3,-2 -3,-0.2 C-3,1.2 -3.9,1.8 -4.2,2.6 L4.2,2.6 C3.9,1.8 3,1.2 3,-0.2 C3,-2 2.4,-4.3 0,-4.3 Z" fill="#eceeef" stroke="none"/><circle cy="3.5" r="1.1" fill="#eceeef" stroke="none"/><path d="M-0.9,-0.6 L0.2,-2.2 L1,-0.6 Z" fill="#555" stroke="none"/></g>
<g transform="translate(13.7,133) scale(1)" fill="none" stroke="#eceeef" stroke-width="1.1" stroke-linecap="round" stroke-linejoin="round"><circle cx="-0.4" cy="0.8" r="3.05" stroke-width="1.45"/><path d="M2.1,3.3 L3.6,4.7" stroke-width="1.5"/></g>
<g transform="translate(13.7,154.4) scale(1)" fill="none" stroke="#eceeef" stroke-width="1.1" stroke-linecap="round" stroke-linejoin="round"><polygon points="0.00,-4.60 1.44,-1.58 4.76,-1.15 2.33,1.16 2.94,4.45 0.00,2.85 -2.94,4.45 -2.33,1.16 -4.76,-1.15 -1.44,-1.58" fill="#eceeef" stroke="#eceeef" stroke-width="0.8"/></g>
<g transform="translate(13.7,173.4) scale(0.98)" fill="none" stroke="#cdd1d4" stroke-width="1.1" stroke-linecap="round" stroke-linejoin="round"><path d="M-4.4,4.2 L4.6,4.2" stroke-width="1"/><path d="M-2.8,4 V1.4 M-0.6,4 V0.2 M1.6,4 V1 M3.8,4 V-0.8" stroke-width="1.3"/><path d="M-3.8,-0.6 L-0.8,-2.6 L0.8,-1.4 L4,-4.4 M4,-4.4 L2.4,-4.4 M4,-4.4 L4,-2.8" stroke-width="0.9"/></g>
<g transform="translate(13.7,193) scale(1)" fill="none" stroke="#dcdcdc" stroke-width="1.1" stroke-linecap="round" stroke-linejoin="round"><path d="M-4.6,1.6 A4.6,4.8 0 0 1 4.6,1.6" stroke-width="1.1"/><ellipse cx="0" cy="2.9" rx="5.8" ry="1.3" fill="#d8d8d8" stroke="none"/><path d="M-1.3,-3 V1.2 M1.3,-3 V1.2" stroke-width="0.9"/></g>
<g transform="translate(13.7,212) scale(1)" fill="none" stroke="#b9bdc0" stroke-width="1.1" stroke-linecap="round" stroke-linejoin="round"><path d="M-3.4,-1 A3.4,3.6 0 0 1 3.4,-1" /><path d="M-4.2,-0.8 H4.2" /><path d="M-2.6,-0.2 C-2.6,2.8 2.6,2.8 2.6,-0.2" stroke-width="0.9"/><path d="M-4.8,4.8 C-4.4,2.2 4.4,2.2 4.8,4.8 Z" stroke-width="0.9" fill="#9a9a9a"/></g>
<g transform="translate(13.7,231.4) scale(1)" fill="none" stroke="#cdd1d4" stroke-width="1.1" stroke-linecap="round" stroke-linejoin="round"><path d="M-4.6,1.6 V-3.8 H-1.2 L0.4,-0.8 V1.6 Z" stroke-width="1"/><circle cx="-3.2" cy="3" r="1.2" stroke-width="0.9"/><circle cx="-0.2" cy="3" r="1.2" stroke-width="0.9"/><path d="M2.6,-4.2 V3.4 H5.2" stroke-width="1"/><path d="M3.4,-2 H5 V1.4 H3.4 Z" stroke-width="0.8"/></g>
<g transform="translate(13.7,251.1) scale(1)" fill="none" stroke="#d6d8da" stroke-width="1.1" stroke-linecap="round" stroke-linejoin="round"><path d="M-4.6,-1.8 L-3.2,-4.6 H3.2 L4.6,-1.8 V4.6 H-4.6 Z" stroke-width="1"/><path d="M-4.6,-1.8 H4.6 M0,-4.6 V-1.8" stroke-width="0.8"/><path d="M-1.8,0.8 H1.8 M-1.8,2.4 H1.8" stroke-width="0.8"/></g>
<g transform="translate(13.7,270.8) scale(1)" fill="none" stroke="#cdd1d4" stroke-width="1.1" stroke-linecap="round" stroke-linejoin="round"><circle cy="-2.6" r="1.7" stroke-width="0.9"/><circle cx="-3.7" cy="-1.4" r="1.2" stroke-width="0.8"/><circle cx="3.7" cy="-1.4" r="1.2" stroke-width="0.8"/><path d="M-2.8,4 C-2.8,-0.2 2.8,-0.2 2.8,4 Z" stroke-width="0.9"/><path d="M-5.8,3.6 C-5.8,1.2 -3.6,0.6 -2.6,1.2 M5.8,3.6 C5.8,1.2 3.6,0.6 2.6,1.2 M-5.8,3.9 H5.8" stroke-width="0.8"/></g>
<g transform="translate(13.7,290.2) scale(1)" fill="none" stroke="#cdd1d4" stroke-width="1.1" stroke-linecap="round" stroke-linejoin="round"><path d="M-6.2,-2.6 L-3.8,-3.8 L-0.8,-2.6 L1.4,-3.6 L3.8,-3.6 L6.2,-2.4 M-6.2,1.4 L-4.2,1 L-1.2,3.8 L1.2,3.2 L4.2,0.8 L6.2,1.4 M-0.8,-2.6 L-2.6,-0.2 L-0.8,0.4 L1,-1.2 L4.2,0.8" stroke-width="0.9"/><path d="M-6.6,-3.2 V2 M6.6,-3.2 V2" stroke-width="1"/></g>
<g transform="translate(13.95,309.7) scale(1)" fill="none" stroke="#dadcde" stroke-width="1.1" stroke-linecap="round" stroke-linejoin="round"><path d="M0,-4.4 L3.7,-3.1 V-0.2 C3.7,2.2 1.9,3.8 0,4.6 C-1.9,3.8 -3.7,2.2 -3.7,-0.2 V-3.1 Z" stroke-width="1"/></g>
<g transform="translate(13.7,329.6) scale(1)" fill="none" stroke="#cdd1d4" stroke-width="1.1" stroke-linecap="round" stroke-linejoin="round"><rect x="-5.4" y="-2.2" width="10.8" height="6.8" rx="1.1" stroke-width="1"/><path d="M-1.9,-2.2 V-4.2 H1.9 V-2.2" stroke-width="0.9"/><path d="M-5.4,0.9 H5.4" stroke-width="0.8"/><path d="M-0.9,0.9 V1.9 H0.9 V0.9" stroke-width="0.7"/></g>
<g transform="translate(13,349.8)" stroke-linecap="round"><circle r="4.2" fill="#8c8c8c"/><circle r="2.6" fill="none" stroke="#a4a4a4" stroke-width="0.6"/><path d="M0,0 L4.6,-5" stroke="#d6d6d6" stroke-width="0.9"/></g>
<g transform="translate(14.0,368.3) scale(1)" fill="none" stroke="#eceeef" stroke-width="1.1" stroke-linecap="round" stroke-linejoin="round"><path d="M-5,-4.2 H-3.4 L-1.8,1.4 H3.8 L5,-2.4 H-2.9" stroke-width="1.15"/><circle cx="-1.5" cy="3.6" r="0.95" fill="#eceeef" stroke="none"/><circle cx="3.3" cy="3.6" r="0.95" fill="#eceeef" stroke="none"/><path d="M-0.6,-0.8 H2.6" stroke-width="1.3"/></g>
<g fill="#eceeef"><circle cx="10.5" cy="393" r="1.05"/><circle cx="13.7" cy="393" r="1.05"/><circle cx="16.9" cy="393" r="1.05"/></g>
 <rect x="0" y="382.3" width="27.3" height="2" fill="url(#sepg)"/>
 <circle cx="13.75" cy="413.6" r="10.2" fill="url(#av)"/>
 <circle cx="13.75" cy="413.6" r="10.2" fill="none" stroke="#2b6a72" stroke-width="0.5" stroke-dasharray="0.7 0.7" opacity="0.8"/>
 <path d="M15.7,405.9 C13.4,408 10.4,410.6 11,412.4 C11.6,414.2 15.6,414.6 15.3,416.4 C15.1,417.8 13.7,419.2 12.9,420.1" fill="none" stroke="#1f8fa0" stroke-width="2.4" stroke-linecap="round" opacity="0.4"/>
 <path d="M15.7,405.9 C13.4,408 10.4,410.6 11,412.4 C11.6,414.2 15.6,414.6 15.3,416.4 C15.1,417.8 13.7,419.2 12.9,420.1" fill="none" stroke="#2fc9bb" stroke-width="1.15" stroke-linecap="round"/>
 <path d="M12.6,409.6 C10.8,411.4 11.2,412.8 13,413.4 C14.2,413.8 15.2,414.6 15.3,415.8" fill="none" stroke="#d2f070" stroke-width="0.7" stroke-linecap="round"/>
</svg>

</div></body></html>
